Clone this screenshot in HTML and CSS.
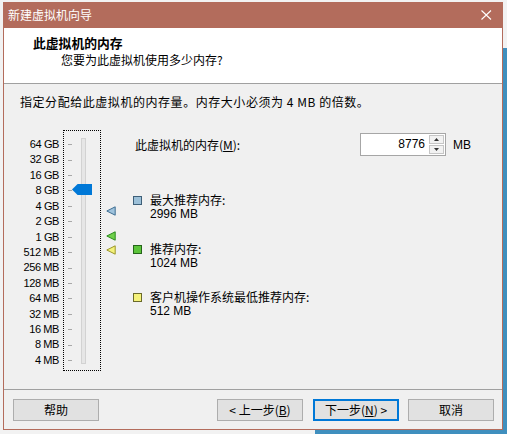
FILE: index.html
```html
<!DOCTYPE html>
<html lang="zh-CN">
<head>
<meta charset="utf-8">
<title>新建虚拟机向导</title>
<link rel="stylesheet" href="styles.css">
</head>
<body>
<div class="window">
  <div class="titlebar">
    <span class="title">新建虚拟机向导</span>
    <svg class="close" width="11" height="10" viewBox="0 0 11 10"><path d="M0.5 0.5 L10 9.5 M10 0.5 L0.5 9.5" stroke="#fff" stroke-width="1.1" fill="none"/></svg>
  </div>
  <div class="header">
    <div class="h-title">此虚拟机的内存</div>
    <div class="h-sub">您要为此虚拟机使用多少内存?</div>
  </div>
  <div class="content">
    <p class="intro">指定分配给此虚拟机的内存量。内存大小必须为 4 MB 的倍数。</p>
    <div class="main">
      <div class="labels">
        <span>64 GB</span><span>32 GB</span><span>16 GB</span><span>8 GB</span><span>4 GB</span><span>2 GB</span><span>1 GB</span><span>512 MB</span><span>256 MB</span><span>128 MB</span><span>64 MB</span><span>32 MB</span><span>16 MB</span><span>8 MB</span><span>4 MB</span>
      </div>
      <div class="slider-box">
        <div class="ticks"><i></i><i></i><i></i><i></i><i></i><i></i><i></i><i></i><i></i><i></i><i></i><i></i><i></i><i></i><i></i></div>
        <div class="track"></div>
        <div class="thumb"></div>
      </div>
      <div class="markers">
        <svg class="marker m-max" width="10" height="10" viewBox="0 0 10 10"><polygon points="0.8,5 9.2,0.8 9.2,9.2" fill="#9fc3dd" stroke="#3f6f93" stroke-width="1"/></svg>
        <svg class="marker m-rec" width="10" height="10" viewBox="0 0 10 10"><polygon points="0.8,5 9.2,0.8 9.2,9.2" fill="#6fd04a" stroke="#2b8a1e" stroke-width="1"/></svg>
        <svg class="marker m-min" width="10" height="10" viewBox="0 0 10 10"><polygon points="0.8,5 9.2,0.8 9.2,9.2" fill="#f4f27a" stroke="#9a9628" stroke-width="1"/></svg>
      </div>
      <div class="settings">
        <div class="mem-row">
          <span class="mem-label">此虚拟机的内存(<u>M</u>):</span>
          <div class="spin">
            <span class="spin-value">8776</span>
            <div class="spin-btns">
              <span class="spin-btn"><svg width="5" height="3" viewBox="0 0 5 3"><polygon points="2.5,0 5,3 0,3" fill="#333"/></svg></span>
              <span class="spin-btn"><svg width="5" height="3" viewBox="0 0 5 3"><polygon points="0,0 5,0 2.5,3" fill="#333"/></svg></span>
            </div>
          </div>
          <span class="unit">MB</span>
        </div>
        <div class="legend">
          <div class="item">
            <span class="sq sq-max"></span>
            <div class="item-text"><div>最大推荐内存:</div><div class="num">2996 MB</div></div>
          </div>
          <div class="item">
            <span class="sq sq-rec"></span>
            <div class="item-text"><div>推荐内存:</div><div class="num">1024 MB</div></div>
          </div>
          <div class="item">
            <span class="sq sq-min"></span>
            <div class="item-text"><div>客户机操作系统最低推荐内存:</div><div class="num">512 MB</div></div>
          </div>
        </div>
      </div>
    </div>
  </div>
  <div class="footer">
    <button class="btn">帮助</button>
    <div class="spacer"></div>
    <button class="btn">&lt; 上一步(<u>B</u>)</button>
    <button class="btn btn-default">下一步(<u>N</u>) &gt;</button>
    <button class="btn">取消</button>
  </div>
</div>
</body>
</html>
```
FILE: styles.css
```css
* { box-sizing: border-box; }
html, body { margin: 0; padding: 0; }
body {
  width: 507px;
  height: 434px;
  overflow: hidden;
  background:
    linear-gradient(#3f8fbe, #3f8fbe) right 0 top 48px / 4px 100% no-repeat,
    linear-gradient(#3f8fbe, #3f8fbe) left 315px bottom 0 / 100% 4px no-repeat,
    #f2f2f2;
  font-family: "Liberation Sans", "Noto Sans CJK SC", sans-serif;
  font-size: 12px;
  color: #000;
}
.window {
  margin: 2px 0 0 3px;
  width: 500px;
  height: 428px;
  border: 1px solid #b36c5c;
  background: #f0f0f0;
  display: flex;
  flex-direction: column;
}
.titlebar {
  height: 25px;
  background: #b36c5c;
  display: flex;
  align-items: center;
  padding: 0 10px 1px 4px;
  color: #fff;
}
.title {
  font-family: "Noto Sans CJK SC", sans-serif;
  font-size: 12px;
  line-height: 16px;
  flex: 1;
}
.close { display: block; margin-top: -1px; }
.header {
  height: 56px;
  background: #fff;
  border-bottom: 1px solid #a0a0a0;
  padding: 7px 0 0 29px;
  font-family: "Noto Sans CJK SC", sans-serif;
}
.h-title {
  font-weight: bold;
  font-size: 12.8px;
  line-height: 16px;
}
.h-sub {
  font-size: 12px;
  line-height: 17px;
  padding-left: 28px;
}
.content {
  flex: 1;
  padding: 0;
}
.intro {
  margin: 10px 0 0 16px;
  line-height: 16px;
  font-family: "Noto Sans CJK SC", sans-serif;
  font-size: 12px;
  letter-spacing: 0.55px;
}
.main {
  display: flex;
  align-items: flex-start;
  margin: 20px 0 0 9px;
}
.labels {
  width: 46px;
  margin-right: 4px;
  padding-top: 7px;
  display: flex;
  flex-direction: column;
  align-items: flex-end;
  font-size: 11px;
  letter-spacing: -0.4px;
}
.labels span {
  height: 15.43px;
  line-height: 15.43px;
  white-space: nowrap;
}
.slider-box {
  position: relative;
  width: 38px;
  height: 241px;
  border: 1px dotted #000;
}
.ticks {
  padding: 6px 0 0 4px;
  display: flex;
  flex-direction: column;
}
.ticks i {
  height: 15.43px;
  display: flex;
  align-items: center;
}
.ticks i::before {
  content: "";
  width: 4px;
  height: 1px;
  background: #a8a8a8;
}
.track {
  position: absolute;
  left: 17px;
  top: 7px;
  width: 5px;
  height: 226px;
  background: #e6e6e6;
  border: 1px solid #d2d2d2;
}
.thumb {
  position: absolute;
  left: 8px;
  top: 53px;
  width: 20px;
  height: 11px;
  background: #0078d7;
  clip-path: polygon(0 50%, 28% 0, 100% 0, 100% 100%, 28% 100%);
}
.markers {
  position: relative;
  width: 32px;
  height: 241px;
}
.marker { position: absolute; left: 5px; display: block; }
.m-max { top: 76px; }
.m-rec { top: 101px; }
.m-min { top: 115px; }
.settings { flex: 1; }
.mem-row {
  display: flex;
  align-items: center;
  margin-top: 3px;
  height: 23px;
}
.mem-label {
  width: 227px;
  padding-left: 2px;
  font-family: "Noto Sans CJK SC", sans-serif;
  line-height: 16px;
}
.mem-label u, .btn u { text-decoration: underline; text-underline-offset: 1px; }
.spin {
  width: 86px;
  height: 23px;
  border: 1px solid #a6a6a6;
  background: #fff;
  display: flex;
}
.spin-value {
  flex: 1;
  text-align: right;
  padding-right: 4px;
  line-height: 21px;
  font-size: 12px;
}
.spin-btns {
  width: 16px;
  display: flex;
  flex-direction: column;
  gap: 1px;
  padding: 1px 1px 1px 0;
}
.spin-btn {
  flex: 1;
  background: #f2f2f2;
  border: 1px solid #c6c6c6;
  display: flex;
  align-items: center;
  justify-content: center;
}
.spin-btn svg { display: block; }
.unit {
  margin-left: 7px;
  font-size: 12px;
}
.legend {
  margin-top: 37px;
  display: flex;
  flex-direction: column;
  gap: 20.5px;
}
.item {
  display: flex;
  align-items: flex-start;
}
.sq {
  width: 9px;
  height: 9px;
  margin-top: 3px;
  margin-right: 8px;
  border: 1px solid #333;
}
.sq-max { background: #9cc0d8; border-color: #3e5f78; }
.sq-rec { background: #5cc43a; border-color: #25651a; }
.sq-min { background: #f5f27a; border-color: #6a6a2a; }
.item-text {
  font-family: "Noto Sans CJK SC", sans-serif;
  line-height: 14px;
}
.item-text .num {
  font-family: "Liberation Sans", sans-serif;
  font-size: 12px;
}
.footer {
  height: 40px;
  border-top: 1px solid #a0a0a0;
  display: flex;
  align-items: flex-start;
  padding: 9px 8px 0 9px;
}
.spacer { flex: 1; }
.btn {
  width: 86px;
  height: 22px;
  margin: 0 0 0 10px;
  padding: 0;
  background: #e1e1e1;
  border: 1px solid #adadad;
  font-family: "Noto Sans CJK SC", sans-serif;
  font-size: 12px;
  line-height: 18px;
  color: #000;
}
.footer .btn:first-child { margin-left: 0; }
.btn-default {
  border: 2px solid #0078d7;
  margin-right: 9px;
}
.btn-default + .btn { margin-left: 0; }
```
